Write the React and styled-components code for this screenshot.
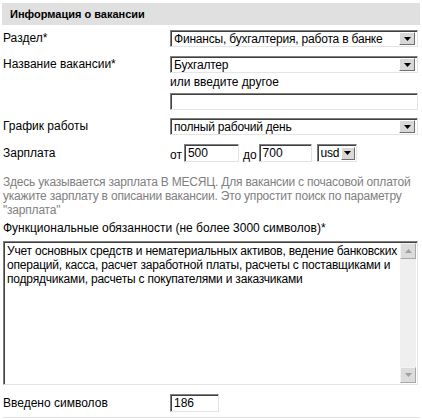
import React from 'react';
import styled, { createGlobalStyle } from 'styled-components';

const GlobalStyle = createGlobalStyle`
  body {
    margin: 0;
    background: #fff;
    font-family: "Liberation Sans", Arial, sans-serif;
    font-size: 12px;
    color: #000;
  }
`;

const Page = styled.div`
  width: 422px;
  height: 420px;
  overflow: hidden;
  display: flex;
  flex-direction: column;
  padding: 3px 2px 0 3px;
  box-sizing: border-box;
`;

const Header = styled.div`
  height: 22px;
  margin-left: -1px;
  background: #e0e0e0;
  font-weight: bold;
  font-size: 11px;
  display: flex;
  align-items: center;
  padding-left: 8px;
`;

const Row = styled.div`
  display: grid;
  grid-template-columns: 167px 248px;
  align-items: center;
  margin-top: ${(p) => p.$gap || 0}px;
`;

const Label = styled.div`
  line-height: 17px;
  align-self: ${(p) => (p.$top ? 'start' : 'center')};
`;

const Controls = styled.div`
  display: flex;
  flex-direction: column;
`;

const Caption = styled.div`
  line-height: 14px;
  margin: 2px 0 4px;
`;

const sunken = `
  box-sizing: border-box;
  border: 1px solid;
  border-color: #808080 #e4e4e4 #e4e4e4 #808080;
  box-shadow: inset 1px 1px 0 #404040;
  background: #fff;
`;

const SelectBox = styled.div`
  ${sunken}
  height: ${(p) => p.$h || 17}px;
  width: ${(p) => p.$w || 248}px;
  display: flex;
  align-items: center;
  padding: 0 ${(p) => (p.$tight ? 1 : 2)}px 0 3px;
`;

const SelectText = styled.span`
  flex: 1;
  white-space: nowrap;
  overflow: hidden;
  letter-spacing: -0.2px;
`;

const ArrowButton = styled.span`
  width: ${(p) => p.$bw || 16}px;
  height: 13px;
  flex-shrink: 0;
  box-sizing: border-box;
  background: #d8d8d8;
  border: 1px solid;
  border-color: #fff #6e6e6e #6e6e6e #fff;
  display: flex;
  align-items: center;
  justify-content: center;
`;

const TextInput = styled.div`
  ${sunken}
  height: ${(p) => p.$h || 17}px;
  width: ${(p) => p.$w || 248}px;
  padding: 0 3px;
  display: flex;
  align-items: center;
`;

const SalaryLine = styled.div`
  display: flex;
  align-items: center;
`;

const Unit = styled.span`
  padding: 4px 2px 0 0;
  margin-left: ${(p) => p.$ml || 0}px;
`;

const Spacer = styled.span`
  width: ${(p) => p.$w}px;
`;

const Hint = styled.p`
  margin: 13px 0 0;
  color: #808080;
  line-height: 14px;
  white-space: nowrap;
  letter-spacing: -0.2px;
`;

const FieldTitle = styled.div`
  margin-top: 4px;
  line-height: 14px;
`;

const TextAreaBox = styled.div`
  ${sunken}
  margin-top: 6px;
  height: 144px;
  width: 415px;
  display: flex;
`;

const TextAreaText = styled.div`
  flex: 1;
  padding: 2px 3px;
  line-height: 14px;
  white-space: nowrap;
  letter-spacing: -0.2px;
`;

const ScrollBar = styled.div`
  width: 16px;
  margin: 1px 1px 1px 0;
  background: #efefef;
  display: flex;
  flex-direction: column;
  justify-content: space-between;
`;

const ScrollButton = styled.div`
  height: 16px;
  box-sizing: border-box;
  background: #dcdcdc;
  border: 1px solid;
  border-color: #f4f4f4 #a8a8a8 #a8a8a8 #f4f4f4;
  display: flex;
  align-items: center;
  justify-content: center;
`;

const Footer = styled.div`
  margin-top: 9px;
  border-bottom: 1px solid #e2e2e2;
  padding-bottom: 5px;
`;

const Arrow = ({ up, color = '#000' }) => (
  <svg width="7" height="4" viewBox="0 0 7 4">
    <path d={up ? 'M0 4 L3.5 0 L7 4 Z' : 'M0 0 L7 0 L3.5 4 Z'} fill={color} />
  </svg>
);

const Select = ({ value, w, h, bw }) => (
  <SelectBox $w={w} $h={h} $tight={!!bw}>
    <SelectText>{value}</SelectText>
    <ArrowButton $bw={bw}>
      <Arrow />
    </ArrowButton>
  </SelectBox>
);

const App = () => (
  <>
    <GlobalStyle />
    <Page>
      <Header>Информация о вакансии</Header>

      <Row $gap={5}>
        <Label>Раздел*</Label>
        <Select value="Финансы, бухгалтерия, работа в банке" />
      </Row>

      <Row $gap={9}>
        <Label $top>Название вакансии*</Label>
        <Controls>
          <Select value="Бухгалтер" />
          <Caption>или введите другое</Caption>
          <TextInput />
        </Controls>
      </Row>

      <Row $gap={8}>
        <Label>График работы</Label>
        <Select value="полный рабочий день" />
      </Row>

      <Row $gap={9}>
        <Label>Зарплата</Label>
        <SalaryLine>
          <Unit>от</Unit>
          <TextInput $w={55} $h={18}>500</TextInput>
          <Unit $ml={4}>до</Unit>
          <TextInput $w={53} $h={18}>700</TextInput>
          <Spacer $w={5} />
          <Select value="usd" w={40} h={18} bw={14} />
        </SalaryLine>
      </Row>

      <Hint>
        Здесь указывается зарплата В МЕСЯЦ. Для вакансии с почасовой оплатой
        <br />
        укажите зарплату в описании вакансии. Это упростит поиск по параметру
        <br />
        "зарплата"
      </Hint>

      <FieldTitle>Функциональные обязанности (не более 3000 символов)*</FieldTitle>
      <TextAreaBox>
        <TextAreaText>
          Учет основных средств и нематериальных активов, ведение банковских
          <br />
          операций, касса, расчет заработной платы, расчеты с поставщиками и
          <br />
          подрядчиками, расчеты с покупателями и заказчиками
        </TextAreaText>
        <ScrollBar>
          <ScrollButton>
            <Arrow up color="#a0a0a0" />
          </ScrollButton>
          <ScrollButton>
            <Arrow color="#a0a0a0" />
          </ScrollButton>
        </ScrollBar>
      </TextAreaBox>

      <Footer>
        <Row>
          <Label>Введено символов</Label>
          <TextInput $w={49} $h={18}>186</TextInput>
        </Row>
      </Footer>
    </Page>
  </>
);

export default App;
